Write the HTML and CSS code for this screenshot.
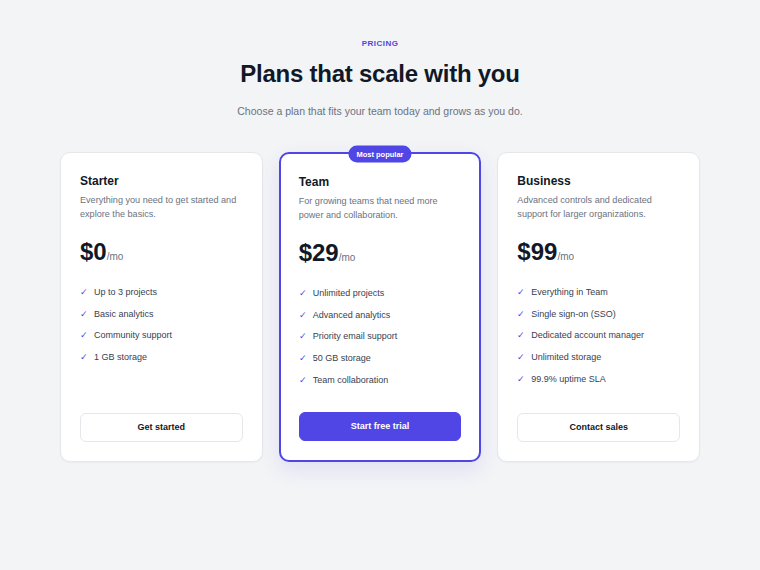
FILE: index.html
```html
<!DOCTYPE html>
<html lang="en">
<head>
  <meta charset="UTF-8">
  <meta name="viewport" content="width=device-width, initial-scale=1.0">
  <title>Pricing</title>
  <link rel="stylesheet" href="styles.css">
</head>
<body>
  <header class="intro">
    <p class="eyebrow">Pricing</p>
    <h1>Plans that scale with you</h1>
    <p class="lead">Choose a plan that fits your team today and grows as you do.</p>
  </header>

  <div class="plans">
    <div class="plan">
      <h3>Starter</h3>
      <p class="blurb">Everything you need to get started and explore the basics.</p>
      <p class="price">$0<span>/mo</span></p>
      <ul class="features">
        <li>Up to 3 projects</li>
        <li>Basic analytics</li>
        <li>Community support</li>
        <li>1 GB storage</li>
      </ul>
      <a class="btn" href="#">Get started</a>
    </div>

    <div class="plan featured">
      <span class="badge">Most popular</span>
      <h3>Team</h3>
      <p class="blurb">For growing teams that need more power and collaboration.</p>
      <p class="price">$29<span>/mo</span></p>
      <ul class="features">
        <li>Unlimited projects</li>
        <li>Advanced analytics</li>
        <li>Priority email support</li>
        <li>50 GB storage</li>
        <li>Team collaboration</li>
      </ul>
      <a class="btn primary" href="#">Start free trial</a>
    </div>

    <div class="plan">
      <h3>Business</h3>
      <p class="blurb">Advanced controls and dedicated support for larger organizations.</p>
      <p class="price">$99<span>/mo</span></p>
      <ul class="features">
        <li>Everything in Team</li>
        <li>Single sign-on (SSO)</li>
        <li>Dedicated account manager</li>
        <li>Unlimited storage</li>
        <li>99.9% uptime SLA</li>
      </ul>
      <a class="btn" href="#">Contact sales</a>
    </div>
  </div>
</body>
</html>
```

FILE: styles.css
```css
* { box-sizing: border-box; }
body { margin: 0; padding: 38px 0 40px; background: #f3f4f6; color: #111827; font-family: "Liberation Sans", Arial, sans-serif; }

.intro { text-align: center; }
.eyebrow { margin: 0; font-size: 8px; line-height: 12px; font-weight: 700; letter-spacing: 0.06em; text-transform: uppercase; color: #4f46e5; }
.intro h1 { margin: 8px 0 0; font-size: 24px; line-height: 32px; font-weight: 700; letter-spacing: -0.01em; color: #111827; }
.lead { margin: 12px 0 0; font-size: 10.5px; line-height: 18px; color: #6b7280; }

.plans { display: grid; grid-template-columns: repeat(3, 1fr); gap: 16px; max-width: 640px; margin: 32px auto 0; }
.plan { position: relative; display: flex; flex-direction: column; background: #fff; border: 1px solid #e5e7eb; border-radius: 10px; padding: 20px 19px 19px; box-shadow: 0 1px 2px rgba(17, 24, 39, 0.04); }
.plan.featured { border: 2px solid #4f46e5; padding: 20px 18px 19px; box-shadow: 0 8px 20px rgba(79, 70, 229, 0.12); }

.badge { position: absolute; top: 0; left: 50%; transform: translate(-50%, -50%); background: #4f46e5; color: #fff; font-size: 7.5px; line-height: 17px; font-weight: 700; padding: 0 8px; border-radius: 999px; white-space: nowrap; }

.plan h3 { margin: 0; font-size: 12px; line-height: 16px; font-weight: 700; color: #111827; }
.blurb { margin: 4px 0 0; font-size: 9.1px; line-height: 14px; color: #6b7280; }
.price { margin: 16px 0 0; font-size: 24px; line-height: 30px; font-weight: 700; color: #111827; }
.price span { font-size: 10px; font-weight: 400; color: #6b7280; }

.features { list-style: none; margin: 13px 0 25px; padding: 0; display: flex; flex-direction: column; gap: 7.7px; }
.features li { position: relative; padding-left: 14px; font-size: 9px; line-height: 14px; color: #374151; }
.features li::before { content: "\2713"; position: absolute; left: 0; top: 0; color: #4f46e5; font-size: 9px; }

.btn { margin-top: auto; display: block; height: 29px; line-height: 27px; text-align: center; font-size: 9px; font-weight: 700; color: #111827; text-decoration: none; border: 1px solid #e5e7eb; border-radius: 6px; background: #fff; }
.btn.primary { background: #4f46e5; border-color: #4f46e5; color: #fff; }
```
